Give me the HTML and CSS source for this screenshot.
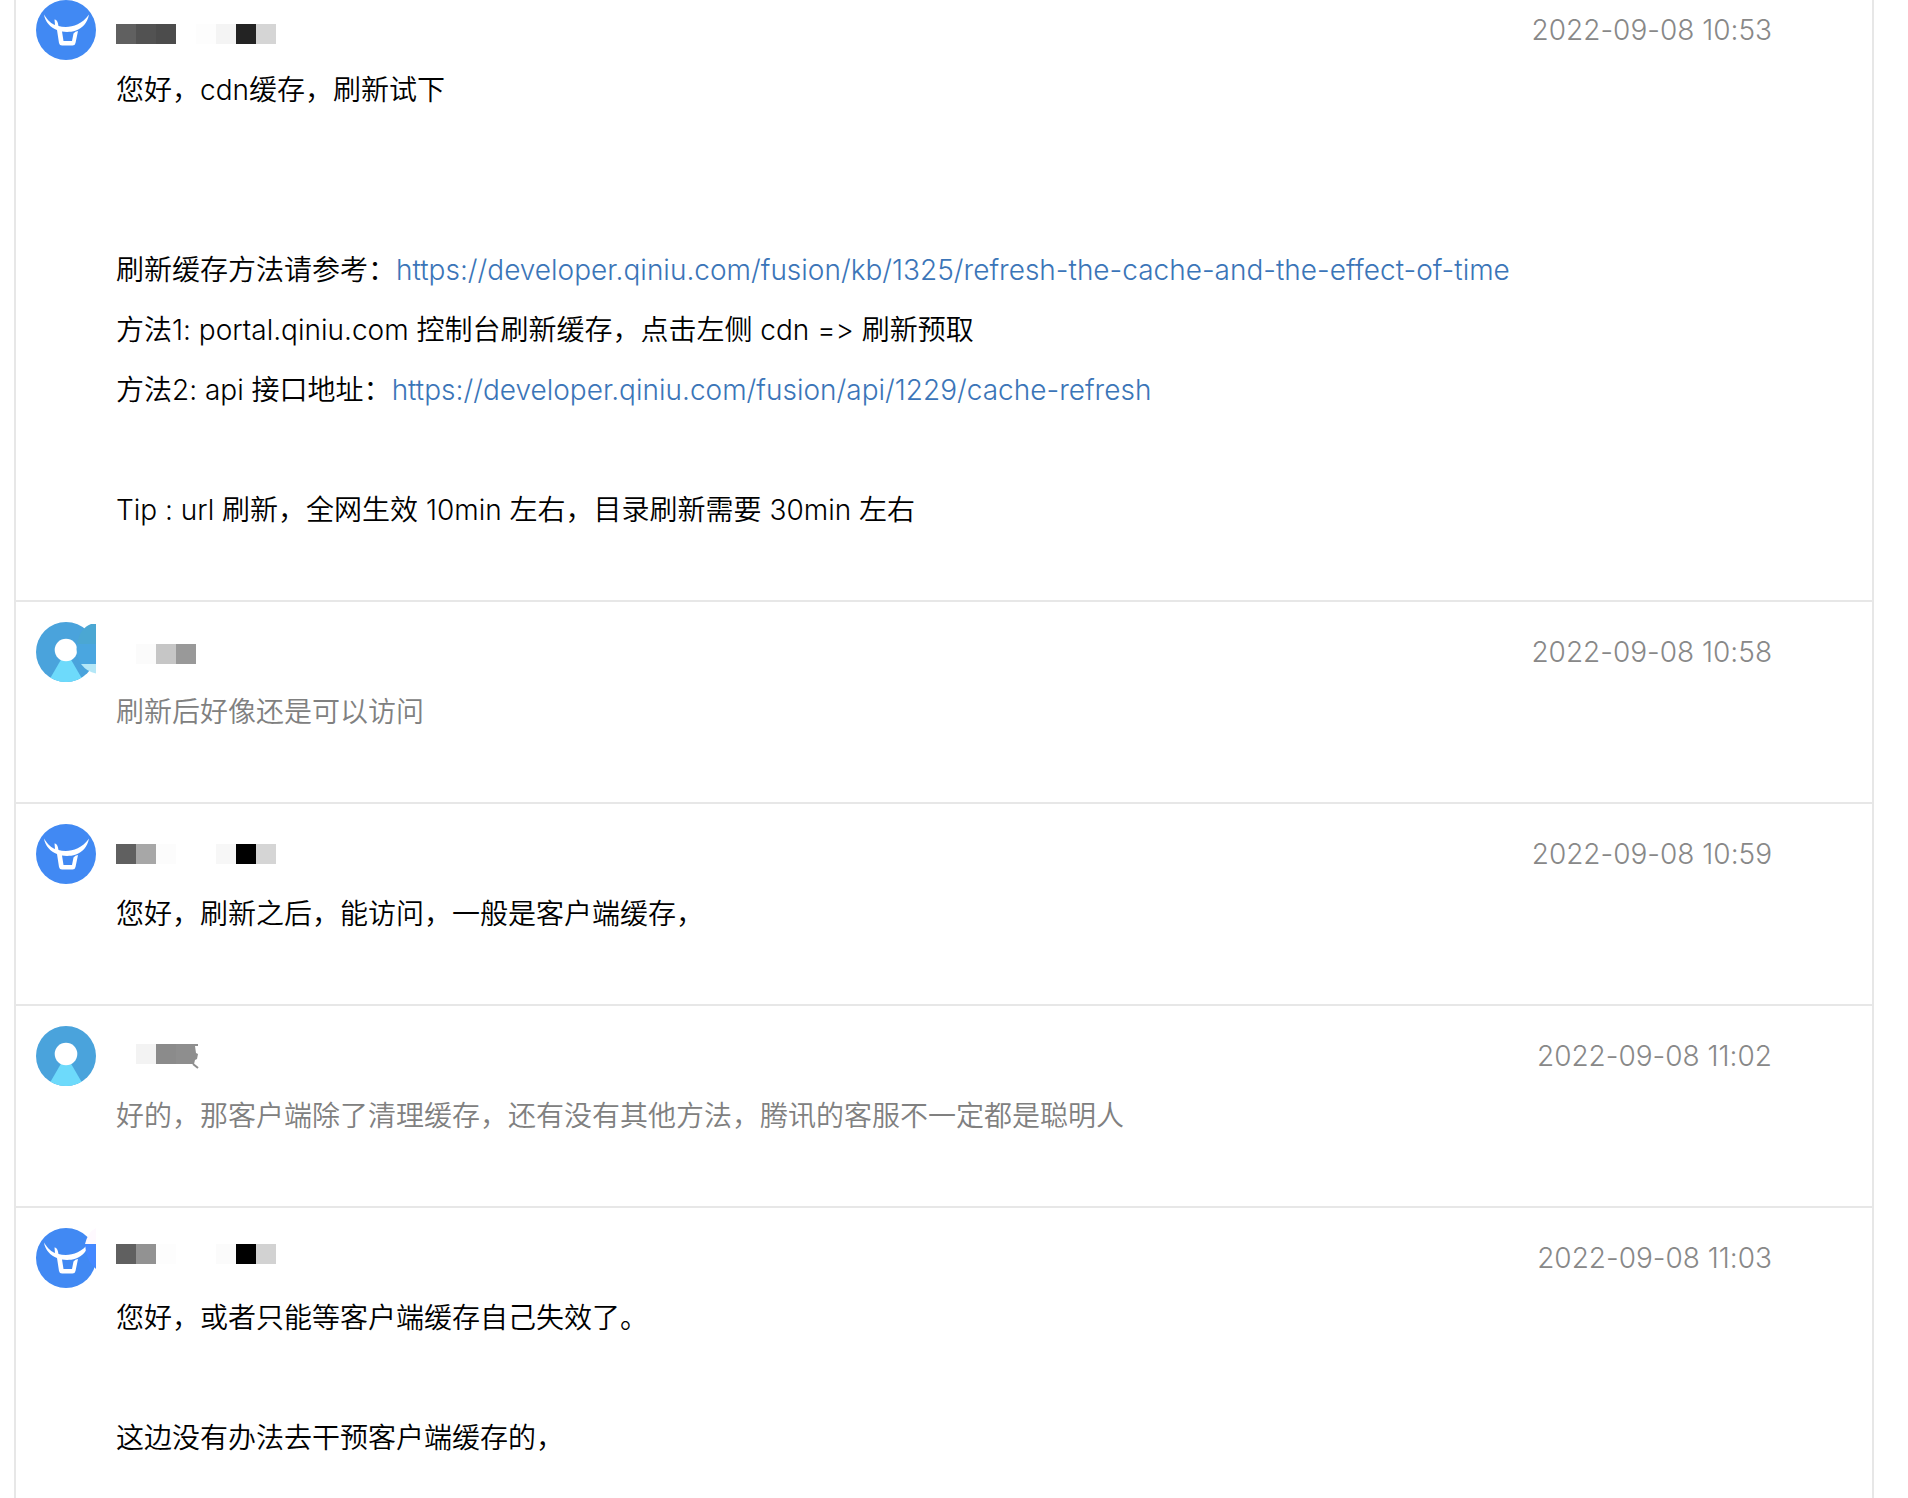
FILE: index.html
```html
<!DOCTYPE html>
<html lang="zh-CN">

<head>
	<meta charset="UTF-8">
	<meta name="viewport" content="width=device-width, initial-scale=1.0">
	<title>工单详情</title>
	<link rel="stylesheet" href="styles.css">
</head>

<body>
	<!-- 头像图标 -->
	<svg class="symbols" aria-hidden="true">
		<symbol id="bull" viewBox="0 0 60 60">
			<circle cx="30" cy="30" r="30" fill="#4189f3" />
			<path fill="#fff" d="M8 14.500C12 21 16 24 19 25L18.500 19.500Q21.500 19 22.500 26C31 28.500 44 27 53 14.500C51.500 23 46 28.500 40 30.500C34 32.500 29 32 26 31.500L27.500 41H36L37.500 33.500Q39 31 42 31L39.500 43Q39 45.500 36.500 45.500H26Q23.500 45.500 23 43L21 30C15 28 9 22 8 14.500Z" />
		</symbol>
		<symbol id="user" viewBox="0 0 60 60">
			<circle cx="30" cy="30" r="30" fill="#4aa3dc" />
			<path fill="#6ddafb" d="M30 29L14.500 55.700A30 30 0 0 0 45.500 55.700Z" />
			<circle cx="30" cy="28" r="11.300" fill="#fff" />
		</symbol>
	</svg>

	<main class="ticket">
		<article class="reply staff">
			<header class="reply-header">
				<svg class="avatar" viewBox="0 0 60 60"><use href="#bull" /></svg>
				<svg class="name" viewBox="0 0 160 60">
					<rect x="0" y="24" width="20" height="20" fill="#606060" />
					<rect x="20" y="24" width="20" height="20" fill="#525252" />
					<rect x="40" y="24" width="20" height="20" fill="#4c4c4c" />
					<rect x="80" y="24" width="20" height="20" fill="#fdfdfd" />
					<rect x="100" y="24" width="20" height="20" fill="#f4f4f4" />
					<rect x="120" y="24" width="20" height="20" fill="#232323" />
					<rect x="140" y="24" width="20" height="20" fill="#d5d5d5" />
				</svg>
				<time class="time">2022-09-08 10:53</time>
			</header>
			<div class="content">
				<p>您好，cdn缓存，刷新试下</p>
				<br>
				<br>
				<p>刷新缓存方法请参考：<a href="https://developer.qiniu.com/fusion/kb/1325/refresh-the-cache-and-the-effect-of-time">https://developer.qiniu.com/fusion/kb/1325/refresh-the-cache-and-the-effect-of-time</a></p>
				<p>方法1: portal.qiniu.com 控制台刷新缓存，点击左侧 cdn =&gt; 刷新预取</p>
				<p>方法2: api 接口地址：<a href="https://developer.qiniu.com/fusion/api/1229/cache-refresh">https://developer.qiniu.com/fusion/api/1229/cache-refresh</a></p>
				<br>
				<p>Tip : url 刷新，全网生效 10min 左右，目录刷新需要 30min 左右</p>
			</div>
		</article>

		<article class="reply customer">
			<header class="reply-header">
				<svg class="avatar" viewBox="0 0 60 60">
					<use href="#user" />
					<path fill="#4ba7d3" d="M60 2H55Q44 6 41 22H60Z" />
					<path fill="#4aa6e0" d="M41 22H60V42H45Q39 32 41 22Z" />
					<path fill="#b4e7f7" d="M45 42H60V51.500Q51 50 45 42Z" />
				</svg>
				<svg class="name" viewBox="0 0 160 60">
					<rect x="20" y="22" width="20" height="20" fill="#fbfbfb" />
					<rect x="40" y="22" width="20" height="20" fill="#c6c6c6" />
					<rect x="60" y="22" width="20" height="20" fill="#999" />
				</svg>
				<time class="time">2022-09-08 10:58</time>
			</header>
			<div class="content">
				<p>刷新后好像还是可以访问</p>
			</div>
		</article>

		<article class="reply staff">
			<header class="reply-header">
				<svg class="avatar" viewBox="0 0 60 60"><use href="#bull" /></svg>
				<svg class="name" viewBox="0 0 160 60">
					<rect x="0" y="20" width="20" height="20" fill="#606060" />
					<rect x="20" y="20" width="20" height="20" fill="#a7a7a7" />
					<rect x="40" y="20" width="20" height="20" fill="#fcfcfc" />
					<rect x="100" y="20" width="20" height="20" fill="#f7f7f7" />
					<rect x="120" y="20" width="20" height="20" fill="#000" />
					<rect x="140" y="20" width="20" height="20" fill="#d5d5d5" />
				</svg>
				<time class="time">2022-09-08 10:59</time>
			</header>
			<div class="content">
				<p>您好，刷新之后，能访问，一般是客户端缓存，</p>
			</div>
		</article>

		<article class="reply customer">
			<header class="reply-header">
				<svg class="avatar" viewBox="0 0 60 60"><use href="#user" /></svg>
				<svg class="name" viewBox="0 0 160 60">
					<rect x="20" y="18" width="20" height="20" fill="#f3f3f3" />
					<rect x="40" y="18" width="20" height="20" fill="#8b8b8b" />
					<path fill="#8e8e8e" d="M60 18H82V20H79L80 27L82 28L81 33L79 34L78 38H60Z" />
					<path fill="none" stroke="#8e8e8e" stroke-width="2" d="M77 38L82 42" />
				</svg>
				<time class="time">2022-09-08 11:02</time>
			</header>
			<div class="content">
				<p>好的，那客户端除了清理缓存，还有没有其他方法，腾讯的客服不一定都是聪明人</p>
			</div>
		</article>

		<article class="reply staff">
			<header class="reply-header">
				<svg class="avatar" viewBox="0 0 60 60">
					<use href="#bull" />
					<path fill="#fef9fe" d="M60 0Q52 4 49 16H60Z" />
					<path fill="#4488ff" d="M49 16H60V41L58 39Q50 32 49 16Z" />
				</svg>
				<svg class="name" viewBox="0 0 160 60">
					<rect x="0" y="16" width="20" height="20" fill="#606060" />
					<rect x="20" y="16" width="20" height="20" fill="#929292" />
					<rect x="40" y="16" width="20" height="20" fill="#fdfdfd" />
					<rect x="100" y="16" width="20" height="20" fill="#fbfbfb" />
					<rect x="120" y="16" width="20" height="20" fill="#000" />
					<rect x="140" y="16" width="20" height="20" fill="#d2d2d2" />
				</svg>
				<time class="time">2022-09-08 11:03</time>
			</header>
			<div class="content">
				<p>您好，或者只能等客户端缓存自己失效了。</p>
				<br>
				<p>这边没有办法去干预客户端缓存的，</p>
			</div>
		</article>
	</main>
</body>

</html>
```
FILE: styles.css
```css
* {
	box-sizing: border-box;
}

body {
	margin: 0;
	background-color: #fff;
	color: #000;
	font-family: Inter, "Noto Sans CJK SC", sans-serif;
	font-size: 28px;
	font-weight: 350;
	font-variant-ligatures: none;
	line-height: 60px;
}

.symbols {
	display: none;
}

.ticket {
	min-height: 100vh;
	margin: 0 34px 0 14px;
	border-left: 2px solid #e7e7e7;
	border-right: 2px solid #e7e7e7;
}

.reply {
	padding: 20px 100px 60px 20px;
	border-bottom: 2px solid #e7e7e7;
}

.reply:first-child {
	padding-top: 0;
}

.reply:last-child {
	padding-bottom: 20px;
	border-bottom: none;
}

.reply-header {
	display: flex;
	gap: 20px;
	height: 60px;
}

.avatar {
	width: 60px;
	height: 60px;
}

/* 打码后的用户名 */
.name {
	width: 160px;
	height: 60px;
}

.time {
	margin-left: auto;
	color: #888;
	font-weight: 300;
}

.content {
	padding-left: 80px;
}

.content p {
	margin: 0;
}

.content a {
	color: #3b75b8;
	font-weight: 300;
	text-decoration: none;
}

.customer .content {
	color: #808080;
}
```
